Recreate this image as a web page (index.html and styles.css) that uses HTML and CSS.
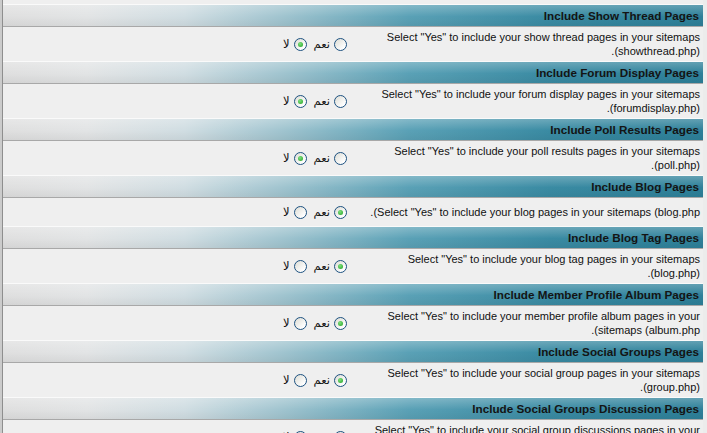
FILE: index.html
```html
<!DOCTYPE html>
<html lang="ar" dir="rtl">
<head>
    <meta charset="UTF-8">
    <meta name="viewport" content="width=device-width, initial-scale=1.0">
    <title>Sitemap Options</title>
    <link rel="stylesheet" href="styles.css">
</head>
<body>
    <div class="page">
        <div class="row-tail"></div>

        <div class="option">
            <div class="option-head">Include Show Thread Pages</div>
            <div class="option-body">
                <div class="option-desc">Select "Yes" to include your show thread pages in your sitemaps (showthread.php).</div>
                <div class="option-ctrl">
                    <label><input type="radio" name="showthread"> نعم</label>
                    <label><input type="radio" name="showthread" checked> لا</label>
                </div>
            </div>
        </div>

        <div class="option">
            <div class="option-head">Include Forum Display Pages</div>
            <div class="option-body">
                <div class="option-desc">Select "Yes" to include your forum display pages in your sitemaps (forumdisplay.php).</div>
                <div class="option-ctrl">
                    <label><input type="radio" name="forumdisplay"> نعم</label>
                    <label><input type="radio" name="forumdisplay" checked> لا</label>
                </div>
            </div>
        </div>

        <div class="option">
            <div class="option-head">Include Poll Results Pages</div>
            <div class="option-body">
                <div class="option-desc">Select "Yes" to include your poll results pages in your sitemaps (poll.php).</div>
                <div class="option-ctrl">
                    <label><input type="radio" name="poll"> نعم</label>
                    <label><input type="radio" name="poll" checked> لا</label>
                </div>
            </div>
        </div>

        <div class="option">
            <div class="option-head">Include Blog Pages</div>
            <div class="option-body">
                <div class="option-desc"><bdo dir="ltr">.(Select "Yes" to include your blog pages in your sitemaps (blog.php</bdo></div>
                <div class="option-ctrl">
                    <label><input type="radio" name="blog" checked> نعم</label>
                    <label><input type="radio" name="blog"> لا</label>
                </div>
            </div>
        </div>

        <div class="option">
            <div class="option-head">Include Blog Tag Pages</div>
            <div class="option-body">
                <div class="option-desc">Select "Yes" to include your blog tag pages in your sitemaps (blog.php).</div>
                <div class="option-ctrl">
                    <label><input type="radio" name="blogtag" checked> نعم</label>
                    <label><input type="radio" name="blogtag"> لا</label>
                </div>
            </div>
        </div>

        <div class="option">
            <div class="option-head">Include Member Profile Album Pages</div>
            <div class="option-body">
                <div class="option-desc">Select "Yes" to include your member profile album pages in your<br><bdo dir="ltr">.(sitemaps (album.php</bdo></div>
                <div class="option-ctrl">
                    <label><input type="radio" name="album" checked> نعم</label>
                    <label><input type="radio" name="album"> لا</label>
                </div>
            </div>
        </div>

        <div class="option">
            <div class="option-head">Include Social Groups Pages</div>
            <div class="option-body">
                <div class="option-desc">Select "Yes" to include your social group pages in your sitemaps (group.php).</div>
                <div class="option-ctrl">
                    <label><input type="radio" name="group" checked> نعم</label>
                    <label><input type="radio" name="group"> لا</label>
                </div>
            </div>
        </div>

        <div class="option">
            <div class="option-head">Include Social Groups Discussion Pages</div>
            <div class="option-body">
                <div class="option-desc">Select "Yes" to include your social group discussions pages in your sitemaps (group.php).</div>
                <div class="option-ctrl">
                    <label><input type="radio" name="discussion" checked> نعم</label>
                    <label><input type="radio" name="discussion"> لا</label>
                </div>
            </div>
        </div>
    </div>
</body>
</html>
```

FILE: styles.css
```css
body {
    margin: 0;
    padding: 0 4px 0 0;
    background-color: #ececec;
    border-left: 2px solid #cbcbcb;
    font-family: "Liberation Sans", "DejaVu Sans", sans-serif;
    font-size: 11px;
    color: #111;
}
.page {
    border-left: 1px solid #8e8e8e;
    background-color: #efefef;
}
.row-tail {
    height: 4px;
}
.option-head {
    height: 21px;
    line-height: 21px;
    padding-right: 4px;
    border-top: 1px solid #fafafa;
    border-bottom: 1px solid #a8a8a8;
    font-weight: bold;
    font-size: 11.7px;
    color: #141414;
    background:
        linear-gradient(to bottom, rgba(255,255,255,0.25), rgba(255,255,255,0) 55%, rgba(0,0,0,0.05)),
        linear-gradient(to left, #2d8099 0%, #3a8ba3 22%, #5aa1b6 42%, #a0c4cf 60%, #d0dde2 74%, #e2e4e5 88%, #dfdfdf 100%);
}
.option-body {
    display: flex;
    align-items: center;
    min-height: 28px;
    background-color: #efefef;
}
.option-desc {
    width: 340px;
    flex-shrink: 0;
    padding: 3px 3px 3px 7px;
    line-height: 14px;
}
.option-ctrl {
    flex: 1;
    display: flex;
    align-items: center;
    gap: 7px;
    padding-right: 6px;
}
.option-ctrl label {
    display: flex;
    align-items: center;
    gap: 4px;
    font-family: "DejaVu Sans", sans-serif;
    font-size: 11.5px;
}
.option-ctrl input {
    appearance: none;
    -webkit-appearance: none;
    width: 13px;
    height: 13px;
    margin: 0;
    border: 1px solid #1c5180;
    border-radius: 50%;
    background: linear-gradient(135deg, #dcdcd4, #ffffff 80%);
    position: relative;
}
.option-ctrl input:checked::after {
    content: "";
    position: absolute;
    left: 3px;
    top: 3px;
    width: 5px;
    height: 5px;
    border-radius: 50%;
    background: radial-gradient(circle at 40% 35%, #7ee07e, #21a121);
}
```
